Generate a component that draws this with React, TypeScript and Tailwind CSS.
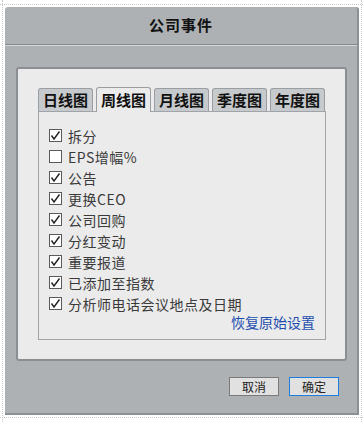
import React from "react";

const items: { label: string; checked: boolean }[] = [
  { label: "拆分", checked: true },
  { label: "EPS增幅%", checked: false },
  { label: "公告", checked: true },
  { label: "更换CEO", checked: true },
  { label: "公司回购", checked: true },
  { label: "分红变动", checked: true },
  { label: "重要报道", checked: true },
  { label: "已添加至指数", checked: true },
  { label: "分析师电话会议地点及日期", checked: true },
];

const tabs = ["日线图", "周线图", "月线图", "季度图", "年度图"];

function Check({ checked }: { checked: boolean }) {
  return (
    <div className="w-[13px] h-[13px] border border-[#5a5a5a] bg-white flex items-center justify-center shrink-0">
      {checked && (
        <svg width="11" height="11" viewBox="0 0 11 11">
          <path d="M1.5 5.5 L4 9 L9.5 1.5" fill="none" stroke="#222" strokeWidth="1.4" />
        </svg>
      )}
    </div>
  );
}

export default function App() {
  const font = { fontFamily: '"Noto Sans CJK SC", "Noto Sans", sans-serif' };
  return (
    <div
      className="w-[363px] h-[422px] bg-white overflow-hidden relative"
      style={font}
    >
      <div className="absolute left-[2px] top-0 bottom-0 border-l border-dotted border-[#c8c8c8]" />
      <div className="absolute left-0 right-0 top-[4px] border-t border-dotted border-[#c8c8c8]" />
      <div className="absolute left-0 right-0 bottom-[4px] border-t border-dotted border-[#c8c8c8]" />
      <div className="absolute right-[1px] top-0 bottom-0 border-l border-dotted border-[#c8c8c8]" />
      <div className="relative ml-[5px] pt-[7px] w-[354px]">
        <div className="h-[408px] bg-[#aeb1b3] rounded-t-[3px] border-r-2 border-b-2 border-[#8c9094] flex flex-col">
          <div className="h-[38px] flex items-center justify-center border-b border-[#85898d]">
            <span className="text-[15px] font-bold text-[#111] tracking-[1px]">公司事件</span>
          </div>
          <div className="h-px bg-[#d6d8da]" />
          <div className="pl-[11px] pt-[21px]">
            <div className="w-[331px] h-[294px] bg-[#ebebeb] border-2 border-[#8b8f94] rounded-[3px] pl-[20px] pt-[19px]">
              <div className="flex items-end gap-[3px] h-[23px]">
                {tabs.map((t, i) => {
                  const active = i === 1;
                  return (
                    <div
                      key={t}
                      className={
                        active
                          ? "w-[55px] h-[25px] bg-[#ebebeb] border border-b-0 border-[#9a9ea2] rounded-t-[3px] flex items-center justify-center text-[15px] font-semibold text-[#111] relative z-10 -mb-px"
                          : "w-[55px] h-[23px] bg-[#c7cacc] border border-b-0 border-[#9a9ea2] rounded-t-[3px] flex items-center justify-center text-[15px] font-semibold text-[#111]"
                      }
                    >
                      {t}
                    </div>
                  );
                })}
              </div>
              <div className="w-[288px] h-[229px] border border-[#a0a4a8] bg-[#ebebeb] pl-[10px] pt-[13px] flex flex-col">
                {items.map((it) => (
                  <div key={it.label} className="h-[21px] flex items-center gap-[6px]">
                    <Check checked={it.checked} />
                    <span className="text-[14px] tracking-[0.5px] text-[#3a3a3a] leading-none">{it.label}</span>
                  </div>
                ))}
                <div className="flex justify-end pr-[10px] mt-[-2px]">
                  <span className="text-[14px] text-[#1f4fae] leading-[20px]">恢复原始设置</span>
                </div>
              </div>
            </div>
          </div>
          <div className="flex justify-end gap-[10px] pr-[18px] pt-[16px]">
            <div className="w-[50px] h-[19px] bg-[#e1e1e1] border border-[#7a7a7a] flex items-center justify-center text-[12px] text-[#222]">
              取消
            </div>
            <div className="w-[50px] h-[19px] bg-[#e1e1e1] border border-[#1e7ee0] flex items-center justify-center text-[12px] text-[#222]">
              确定
            </div>
          </div>
        </div>
      </div>
    </div>
  );
}
